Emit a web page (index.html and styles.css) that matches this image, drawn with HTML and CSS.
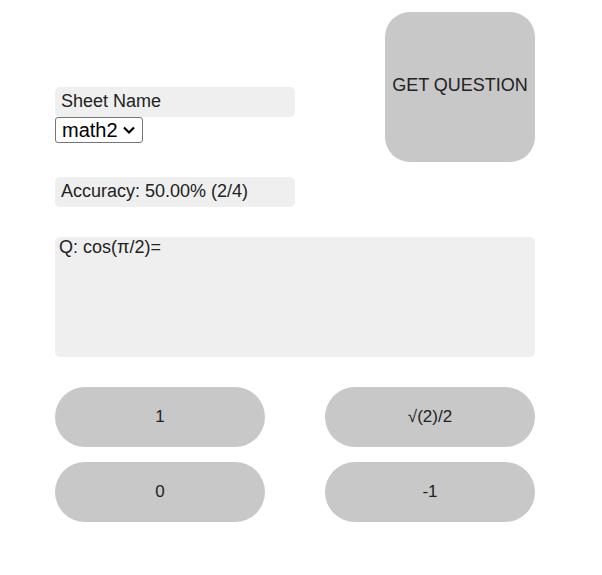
FILE: index.html
```html
<!DOCTYPE html>
<html>
<head>
<meta charset="utf-8">
<link rel="stylesheet" href="styles.css">
</head>
<body>
<div class="app">
  <div class="top">
    <div class="sheet">
      <div class="label">Sheet Name</div>
      <select class="picker"><option>math2</option></select>
    </div>
    <button class="get">GET QUESTION</button>
  </div>
  <div class="label accuracy">Accuracy: 50.00% (2/4)</div>
  <div class="question">Q: cos(π/2)=</div>
  <div class="answers">
    <button class="ans">1</button>
    <button class="ans">√(2)/2</button>
    <button class="ans">0</button>
    <button class="ans">-1</button>
  </div>
</div>
</body>
</html>
```
FILE: styles.css
```css
body {
  margin: 0;
  font-family: "Liberation Sans", Arial, sans-serif;
  color: #222;
  background: #fff;
}
.app {
  width: 480px;
  margin-left: 55px;
  padding-top: 12px;
}
.top {
  display: flex;
  justify-content: space-between;
}
.sheet {
  width: 240px;
  margin-top: 75px;
}
.label {
  box-sizing: border-box;
  width: 240px;
  height: 30px;
  background: #efefef;
  border-radius: 5px;
  padding: 0 6px;
  font-size: 18px;
  line-height: 29px;
}
.picker {
  display: block;
  box-sizing: border-box;
  margin-top: 0;
  width: 88px;
  height: 26px;
  padding: 0 0 0 6px;
  border: 1px solid #767676;
  border-radius: 3px;
  background-color: #fff;
  background-image: url("data:image/svg+xml,%3Csvg xmlns='http://www.w3.org/2000/svg' width='14' height='10' viewBox='0 0 14 10'%3E%3Cpath d='M2 2.5 L7 7.5 L12 2.5' fill='none' stroke='%23000' stroke-width='2.2'/%3E%3C/svg%3E");
  background-repeat: no-repeat;
  background-position: right 6px center;
  background-size: 14px 10px;
  -webkit-appearance: none;
  appearance: none;
  font-family: "Liberation Sans", Arial, sans-serif;
  font-size: 20px;
  line-height: 24px;
  color: #000;
}
.get {
  width: 150px;
  height: 150px;
  border: none;
  border-radius: 25px;
  background: #c8c8c8;
  font-family: "Liberation Sans", Arial, sans-serif;
  font-size: 18px;
  color: #222;
  padding: 0 0 4px 0;
}
.accuracy {
  margin-top: 15px;
}
.question {
  box-sizing: border-box;
  margin-top: 30px;
  height: 120px;
  background: #efefef;
  border-radius: 5px;
  padding: 0 4px;
  font-size: 18px;
}
.answers {
  margin-top: 30px;
  display: grid;
  grid-template-columns: 210px 210px;
  column-gap: 60px;
  row-gap: 15px;
}
.ans {
  height: 60px;
  border: none;
  border-radius: 30px;
  background: #c8c8c8;
  font-family: "Liberation Sans", Arial, sans-serif;
  font-size: 17px;
  color: #222;
}
```
